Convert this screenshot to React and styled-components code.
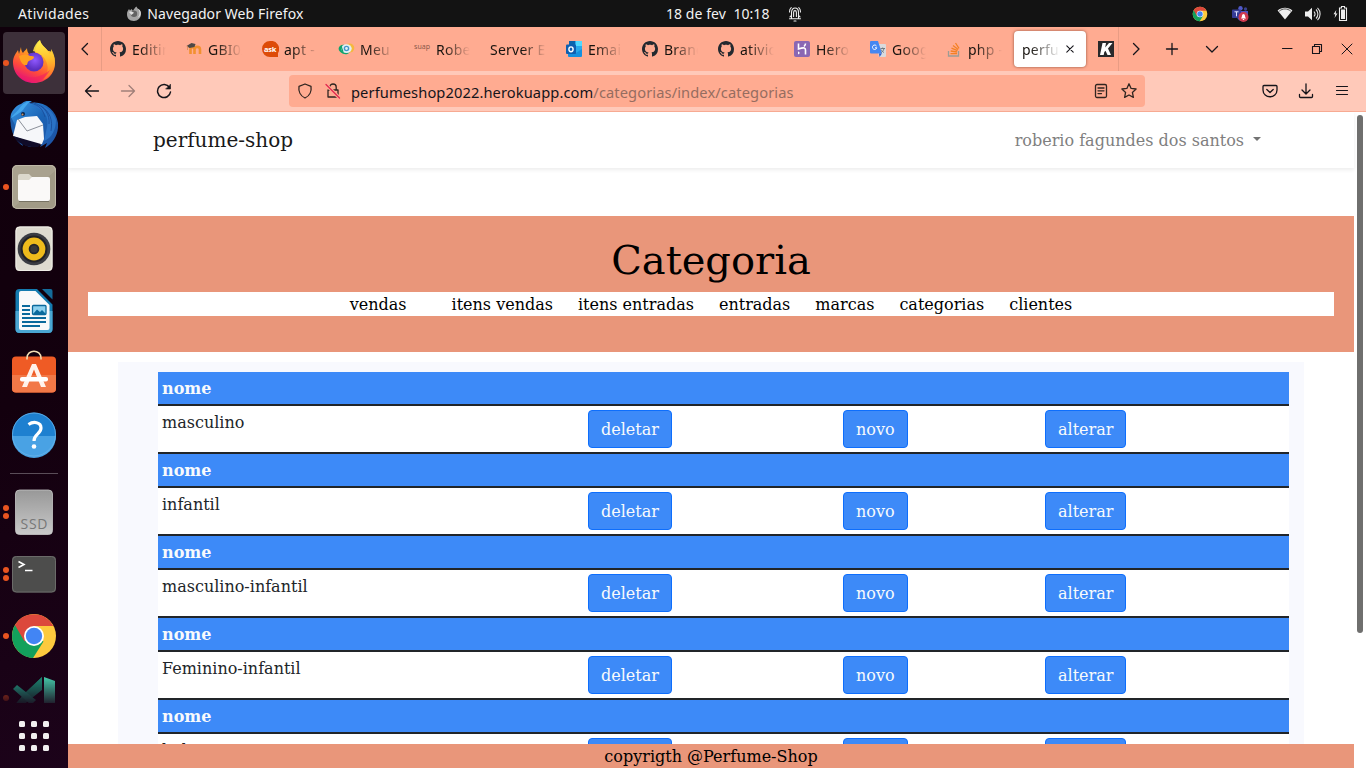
import React from "react";
import styled, { createGlobalStyle } from "styled-components";

const GlobalStyle = createGlobalStyle`
  * { box-sizing: border-box; }
  body { margin: 0; background: #131313; overflow: hidden; }
  svg { display: block; flex: none; }
`;

const uiFont = `"Noto Sans", "Open Sans", sans-serif`;
const serif = `"DejaVu Serif", serif`;

const Desktop = styled.div`
  width: 1366px;
  height: 768px;
  display: flex;
  flex-direction: column;
  overflow: hidden;
  font-family: ${uiFont};
`;

/* ---------- system bar ---------- */

const SystemBar = styled.header`
  height: 27px;
  display: grid;
  grid-template-columns: 666px 1fr 174px;
  align-items: center;
  background: #131313;
  color: #f2f2f2;
  font-size: 14px;
  line-height: 27px;
`;

const SystemGroup = styled.div`
  display: flex;
  align-items: center;
  height: 27px;
`;

const SystemText = styled.span`
  white-space: pre;
  letter-spacing: ${(p) => p.$track || 0}px;
  margin-left: ${(p) => p.$left || 0}px;
`;

const SystemIcon = styled.span`
  display: flex;
  margin-left: ${(p) => p.$left || 0}px;
`;

/* ---------- dock ---------- */

const Body = styled.div`
  flex: 1;
  display: flex;
  min-height: 0;
`;

const Dock = styled.nav`
  width: 68px;
  padding-top: 5px;
  display: flex;
  flex-direction: column;
  background: linear-gradient(160deg, #10000b 0%, #13000e 50%, #1c031a 100%);
`;

const DockSlot = styled.div`
  position: relative;
  height: ${(p) => p.$height || 62}px;
  width: 62px;
  margin-left: 3px;
  flex: none;
  padding: 7px 7px 0;
  overflow: hidden;
  border-radius: 4px;
  background: ${(p) => (p.$active ? "#3d303a" : "transparent")};
  ${(p) => p.$fade && `mask-image: linear-gradient(#000 22%, rgba(0,0,0,.15) 100%);`}
`;

const Dots = styled.div`
  position: absolute;
  left: 0;
  top: 0;
  height: 62px;
  display: flex;
  flex-direction: column;
  justify-content: center;
  gap: 2px;
`;

const Dot = styled.i`
  width: 6px;
  height: 6px;
  border-radius: 50%;
  background: #e95420;
`;

const DockDivider = styled.hr`
  width: 48px;
  height: 1px;
  margin: 7px 0 7px 10px;
  border: 0;
  background: #5a4d58;
`;

const AppGrid = styled.div`
  flex: 1;
  display: grid;
  grid-template-columns: repeat(3, 6px);
  grid-auto-rows: 6px;
  gap: 6px;
  justify-content: center;
  align-content: center;
  i { background: #f0efef; border-radius: 1.5px; }
`;

/* ---------- browser ---------- */

const Browser = styled.main`
  flex: 1;
  min-width: 0;
  display: flex;
  flex-direction: column;
  background: #fff;
`;

const TabStrip = styled.div`
  height: 44px;
  display: flex;
  align-items: center;
  background: #ffab91;
  color: #17130f;
`;

const StripButton = styled.span`
  width: ${(p) => p.$width}px;
  height: 44px;
  flex: none;
  display: flex;
  align-items: center;
  justify-content: center;
`;

const Tabs = styled.div`
  width: 1018px;
  height: 44px;
  display: flex;
  align-items: center;
  overflow: hidden;
  border-left: 1px solid #e89c84;
  border-right: 1px solid #e89c84;
`;

const Tab = styled.div`
  width: 72px;
  height: 36px;
  margin-right: 4px;
  padding-left: 8px;
  display: flex;
  align-items: center;
  flex: none;
  border-radius: 4px;
  font-size: 14px;
  ${(p) => p.$active && `background: #fff; box-shadow: 0 0 3px rgba(90, 40, 20, .7);`}
`;

const TabIcon = styled.span`
  width: 16px;
  margin-right: 6px;
`;

const TabLabel = styled.span`
  flex: 1;
  overflow: hidden;
  white-space: pre;
  line-height: 20px;
  padding-top: 1px;
  margin-right: ${(p) => (p.$active ? 6 : 8)}px;
  letter-spacing: 0.25px;
  mask-image: linear-gradient(to right, #000 ${(p) => (p.$wide ? 32 : 8)}px, transparent 100%);
`;

const Toolbar = styled.div`
  height: 41px;
  display: flex;
  align-items: center;
  background: #ffc9b9;
  border-bottom: 1px solid #f9ac94;
`;

const ToolIcon = styled.span`
  display: flex;
  margin-left: ${(p) => p.$left || 0}px;
`;

const AddressBar = styled.div`
  width: 856px;
  height: 32px;
  margin-left: 117px;
  padding: 0 8px;
  display: flex;
  align-items: center;
  border-radius: 4px;
  background: #ffab91;
`;

const Url = styled.span`
  flex: 1;
  margin-left: 10px;
  padding-top: 1px;
  font-size: 14.67px;
  line-height: 20px;
  letter-spacing: 0.1px;
  color: #15141a;
  white-space: nowrap;
  em { font-style: normal; color: #966d60; }
`;

/* ---------- web page ---------- */

const Viewport = styled.div`
  flex: 1;
  min-height: 0;
  display: flex;
`;

const Page = styled.div`
  width: 1286px;
  display: flex;
  flex-direction: column;
  font: 16px/26px ${serif};
  color: #212529;
`;

const ScrollRail = styled.div`
  width: 12px;
  padding: 3px 3px 0;
`;

const ScrollThumb = styled.div`
  width: 6px;
  height: 518px;
  border-radius: 3px;
  background: #6f6f6e;
`;

const Navbar = styled.div`
  height: 56px;
  flex: none;
  padding: 0 93px 0 85px;
  display: flex;
  align-items: center;
  justify-content: space-between;
  box-shadow: 0 2px 4px rgba(0, 0, 0, 0.075);
`;

const Brand = styled.span`
  font-size: 20px;
  line-height: 30px;
  color: #191919;
`;

const UserMenu = styled.span`
  display: flex;
  align-items: center;
  padding-top: 2px;
  color: #7f7f7f;
`;

const Caret = styled.i`
  margin: -5px 0 0 9px;
  border: 4.8px solid transparent;
  border-top-color: #737373;
  border-bottom: 0;
`;

const Hero = styled.section`
  height: 136px;
  flex: none;
  margin-top: 48px;
  padding: 20px 20px 0;
  background: #e9967a;
  color: #000;
  text-align: center;
`;

const Title = styled.h1`
  margin: 0 0 8px;
  font-size: 40px;
  font-weight: 400;
  line-height: 48px;
`;

const Menu = styled.div`
  display: flex;
  justify-content: center;
  gap: 25px;
  height: 24px;
  background: #fff;
  span:first-child { margin-right: 20px; }
`;

const Content = styled.section`
  flex: 1;
  min-height: 0;
  overflow: hidden;
  margin: 10px 50px 0;
  padding: 10px 15px 0 40px;
  background: #f8f9fe;
`;

const HeadRow = styled.div`
  height: 34px;
  padding: 4px;
  background: #3d8af8;
  border-bottom: 2px solid #212529;
  color: #f8fafc;
  font-weight: 700;
`;

const Row = styled.div`
  height: 48px;
  padding: 4px;
  display: grid;
  grid-template-columns: 426px 255px 202px 1fr;
  align-items: start;
  justify-items: start;
  background: #fff;
  border-bottom: 2px solid #212529;
`;

const Button = styled.button`
  height: 38px;
  padding: 7px 12px 5px;
  border: 1px solid #0d6efd;
  border-radius: 4px;
  background: #3d8af8;
  color: #f8fafc;
  font: 16px/24px ${serif};
`;

const Footer = styled.footer`
  height: 24px;
  flex: none;
  background: #e9967a;
  color: #000;
  text-align: center;
`;

/* ---------- drawings ---------- */

const Line = ({ w = 16, h = w, box, children, color = "#15141a", sw = 1.3, opacity = 1 }) => (
  <svg width={w} height={h} viewBox={box || `0 0 ${w} ${h}`} fill="none" stroke={color}
    strokeWidth={sw} strokeLinecap="round" strokeLinejoin="round" opacity={opacity}>{children}</svg>
);

const Firefox = () => (
  <svg width="48" height="48" viewBox="0 1 48 48">
    <defs>
      <linearGradient id="ffBody" x1=".8" y1="0" x2=".35" y2="1">
        <stop offset="0" stopColor="#ffe141" /><stop offset=".4" stopColor="#ff9a23" />
        <stop offset=".72" stopColor="#ff4a3c" /><stop offset="1" stopColor="#e0107f" />
      </linearGradient>
      <linearGradient id="ffFlame" x1=".4" y1="0" x2=".5" y2="1">
        <stop offset="0" stopColor="#fff44f" /><stop offset=".5" stopColor="#ffc22c" /><stop offset="1" stopColor="#ff6a2a" />
      </linearGradient>
      <radialGradient id="ffGlobe" cx=".55" cy=".4"><stop offset="0" stopColor="#9059ff" /><stop offset="1" stopColor="#5b2fc0" /></radialGradient>
    </defs>
    <path d="M11 9c0 3 1 5 2 6 2-3 3-3 4-5 0 3 1 5 2 6l6-1c0-5 2-10 5-13 1 5 5 7 8 11 4-1 7 5 7 12 0 11-9 20-21 20S3 36 3 24c0-5 3-9 5-12l1 4z" fill="url(#ffBody)" />
    <path d="M23 13c1-5 4-9 7-11 1 6 7 8 10 14 1-2 1-3 1-5 8 12 3 27-8 31 5-6 6-13 3-19-2-5-7-8-13-10z" fill="url(#ffFlame)" opacity=".9" />
    <circle cx="24" cy="24" r="9.5" fill="url(#ffGlobe)" />
    <path d="M9 18c4-2 8-2 11 0 2 0 4 0 4 1 0 3-5 3-6 5-1 1 0 3-2 3-3 1-6-4-7-9z" fill="#ff9f1f" />
    <path d="M4 29c5 11 22 15 36 3-4 8-10 12-17 12C13 44 6 37 4 29z" fill="#f01e62" opacity=".55" />
  </svg>
);

const Thunderbird = () => (
  <svg width="48" height="48" viewBox="0 1 48 48">
    <defs><linearGradient id="tb" x1="0" y1="0" x2="1" y2="1">
      <stop offset="0" stopColor="#3b9be8" /><stop offset=".5" stopColor="#1b63b5" /><stop offset="1" stopColor="#1d4fa0" />
    </linearGradient></defs>
    <path d="M11 4c5-4 9-4 11-3l-3 2c14-3 27 6 29 20 1 10-4 20-13 25l2-5-7 4 3-6-20-6C2 31-1 22 1 14c2-5 6-9 10-10z" fill="url(#tb)" />
    <path d="M1 17c-2 11 3 23 12 29l-1-3c5 4 9 4 12 4-8-5-12-9-16-16z" fill="#1d5ba8" />
    <path d="M7 20l8-3 12-1 6 8 1 15-2 5-3 1L3 36z" fill="#f6f7fa" />
    <path d="M8 19l9 12 16-6" fill="none" stroke="#8b8f99" strokeWidth="1" />
    <path d="M20 6c10 1 20 8 17 21l-3 14c8-3 12-12 12-21C42 9 33 3 20 6z" fill="#2a72c6" />
    <path d="M20 3c10 2 13 7 15 14M24 3c11 3 16 12 15 21M31 6c9 6 12 14 10 25" fill="none" stroke="#1a4f9d" strokeWidth=".9" />
    <path d="M3 36l28 8-3 3C18 48 8 44 3 36z" fill="#100b28" />
    <path d="M9 9c3-5 8-8 12-8-4 3-5 5-8 9-3 3-7 5-12 8 2-4 5-5 8-9z" fill="#43a6ec" />
    <circle cx="13" cy="14" r="2" fill="#0d2547" /><circle cx="12.5" cy="14.5" r="1" fill="#cd9465" />
  </svg>
);

const Files = () => (
  <svg width="48" height="48" viewBox="0 0 48 48">
    <rect x="2" y="2" width="44" height="44" rx="5" fill="#a19a86" />
    <path d="M2 7a5 5 0 0 1 5-5h34a5 5 0 0 1 5 5L3 45l-1-4z" fill="#b1aa97" opacity=".55" />
    <rect x="2.5" y="2.5" width="43" height="43" rx="5" fill="none" stroke="#c5bfae" strokeWidth=".8" />
    <path d="M8 13a2 2 0 0 1 2-2h9l3 3h14v5H8z" fill="#dbd8cc" />
    <path d="M8 17h11l3-3h16a2 2 0 0 1 2 2v20a2 2 0 0 1-2 2H10a2 2 0 0 1-2-2z" fill="#faf9f8" />
    <path d="M9 38.5h30" stroke="#777263" strokeWidth="1" />
  </svg>
);

const Music = () => (
  <svg width="48" height="48" viewBox="0 0 48 48">
    <rect x="5.5" y="1.500" width="37" height="44.500" rx="4" fill="#dedbd0" />
    <rect x="6" y="2" width="36" height="43.500" rx="4" fill="none" stroke="#f0eee8" />
    <circle cx="24" cy="24" r="16.3" fill="#3b3d43" /><circle cx="24" cy="24" r="13.5" fill="#222327" />
    <circle cx="24" cy="24" r="11.4" fill="#eebb1c" /><circle cx="24" cy="24" r="5.3" fill="#252629" />
    <circle cx="24" cy="24" r="3.5" fill="#373839" />
  </svg>
);

const Writer = () => (
  <svg width="48" height="48" viewBox="0 0 48 48">
    <path d="M9.5 2H27l15.500 15.500V42a4 4 0 0 1-4 4h-29a4 4 0 0 1-4-4V6a4 4 0 0 1 4-4z" fill="#147bb0" />
    <path d="M5.500 24H42.500v18a4 4 0 0 1-4 4h-29a4 4 0 0 1-4-4z" fill="#4aa6d2" />
    <path d="M11 4h14.500L39.500 18v23a2 2 0 0 1-2 2H11a2 2 0 0 1-2-2V6a2 2 0 0 1 2-2z" fill="#f8f9fa" />
    <path d="M32 2h8.500a2 2 0 0 1 2 2v8.500z" fill="#146c9b" />
    <path d="M12 19h8m-8 4h8m-8 4h8m-8 4h24m-24 4h24m-24 4h18" stroke="#0a699c" strokeWidth="1.800" />
    <rect x="22.500" y="18.500" width="13.500" height="9" rx="1" fill="#8dd1ef" stroke="#0a699c" strokeWidth="1.300" />
    <path d="M23 27l4-4.500 3 2.500 2-2 4 4v.5H23z" fill="#0a699c" />
  </svg>
);

const Software = () => (
  <svg width="48" height="48" viewBox="0 0 48 48">
    <rect x="2" y="7.500" width="44" height="36" rx="4" fill="#ef5b25" />
    <path d="M2 26h44v13.500a4 4 0 0 1-4 4H6a4 4 0 0 1-4-4z" fill="#f27847" />
    <path d="M17 10.500V9c0-9 14-9 14 0v1.500" fill="none" stroke="#f2dfb4" strokeWidth="1.500" />
    <path d="M12 38l10-23h4l10 23h-5L24 20.500 17 38z" fill="#fff2eb" />
    <rect x="10" y="28" width="28" height="4.500" rx="2" fill="#fff" />
  </svg>
);

const Help = () => (
  <svg width="48" height="48" viewBox="0 1 48 48">
    <circle cx="24" cy="24.500" r="22" fill="#1e80d0" />
    <path d="M2 26a22 22 0 0 0 44 0z" fill="#49a2e4" />
    <circle cx="24" cy="24.500" r="21.500" fill="none" stroke="#68b4ea" strokeWidth=".8" />
    <path d="M18.500 14.500c5-3.500 12.500-2.500 12.500 3.500 0 6-7 6-7 13" fill="none" stroke="#fff" strokeWidth="3.200" />
    <circle cx="24" cy="36.500" r="2.300" fill="#fff" />
  </svg>
);

const Ssd = () => (
  <svg width="48" height="48" viewBox="0 0 48 48">
    <defs><linearGradient id="ssd" x1="0" y1="0" x2="0" y2="1">
      <stop offset="0" stopColor="#989898" /><stop offset="1" stopColor="#c9c9c9" /></linearGradient></defs>
    <rect x="5.500" y="2" width="37" height="44.500" rx="4" fill="url(#ssd)" stroke="#c6c6c6" strokeWidth=".8" />
    <text x="24" y="40.500" textAnchor="middle" fontFamily="Open Sans, sans-serif" fontSize="14" fill="#777" textLength="27">SSD</text>
  </svg>
);

const Terminal = () => (
  <svg width="48" height="48" viewBox="0 0 48 48">
    <rect x="2" y="6" width="44" height="36.500" rx="4" fill="#4d4d4c" />
    <rect x="2.500" y="6.500" width="43" height="35.500" rx="4" fill="none" stroke="#6b6b69" />
    <path d="M8.500 11.500l5.500 3-5.500 3" fill="none" stroke="#fff" strokeWidth="1.600" />
    <path d="M15 20.500h7.500" stroke="#fff" strokeWidth="1.500" />
  </svg>
);

const Chrome = ({ size = 48 }) => (
  <svg width={size} height={size} viewBox="0 0 48 48">
    <circle cx="24" cy="24" r="22" fill="#fdca3e" />
    <path d="M24 24L33.500 29.500 23 46A22 22 0 0 1 5 13z" fill="#12a15c" />
    <path d="M4.950 13A22 22 0 0 1 43.300 14H24L14.500 29.500z" fill="#dc483c" />
    <circle cx="24" cy="24" r="10" fill="#fff" /><circle cx="24" cy="24" r="8.200" fill="#4285f4" />
  </svg>
);

const Code = () => (
  <svg width="48" height="48" viewBox="0 0 48 48">
    <path d="M3 33l4 3 25-22V3L17 17z" fill="#167a67" />
    <path d="M3 33l4 3 25-20V3L13 21z" fill="#1c8d76" />
    <path d="M3 15l4-4 19 15-5 5z" fill="#22a68b" />
    <path d="M34 3l11 4v34l-11 5z" fill="#47d6b3" />
  </svg>
);

const GitHub = () => (
  <svg width="16" height="16" viewBox="0 0 16 16" fill="#24292f">
    <path d="M8 0C3.580 0 0 3.580 0 8c0 3.540 2.290 6.530 5.470 7.590.4.070.55-.17.55-.38 0-.19-.01-.82-.01-1.490-2.010.37-2.530-.49-2.690-.94-.09-.23-.48-.94-.82-1.130-.28-.15-.68-.52-.01-.53.63-.01 1.080.58 1.230.82.72 1.210 1.870.87 2.330.66.07-.52.28-.87.51-1.070-1.780-.2-3.640-.89-3.640-3.950 0-.87.31-1.590.82-2.150-.08-.2-.36-1.020.08-2.120 0 0 .67-.21 2.200.82.64-.18 1.320-.27 2-.27s1.360.09 2 .27c1.530-1.040 2.200-.82 2.200-.82.44 1.100.16 1.920.08 2.120.51.56.82 1.270.82 2.150 0 3.070-1.870 3.750-3.650 3.950.29.25.54.73.54 1.480 0 1.070-.01 1.930-.01 2.200 0 .21.15.46.55.38A8.010 8.010 0 0 0 16 8c0-4.420-3.580-8-8-8z" />
  </svg>
);

const Moodle = () => (
  <svg width="16" height="16" viewBox="-.5 0 16 16">
    <path d="M4 13V8.500c0-3 4-3 4 0V13m0-4.500c0-3.500 5.500-3.500 5.500 0V13" fill="none" stroke="#f29030" strokeWidth="2.600" />
    <path d="M0 5l5-3 4 1-1 3-5 1z" fill="#4d4846" /><path d="M1 5v4" stroke="#d98b50" strokeWidth=".8" />
  </svg>
);

const AskUbuntu = () => (
  <svg width="17" height="16" viewBox="0 0 17 16">
    <path d="M8 0a8 8 0 1 0 0 16h8v-4A8 8 0 0 0 8 0z" fill="#dd4b08" />
    <text x="2" y="10.500" fontFamily="Open Sans, sans-serif" fontWeight="700" fontSize="7.500" fill="#fff" textLength="12.500">ask</text>
  </svg>
);

const Globe = () => (
  <svg width="17" height="16" viewBox="0 0 17 16">
    <ellipse cx="6.500" cy="8.500" rx="6" ry="4.500" fill="#11a36d" transform="rotate(20 6.500 8.500)" />
    <ellipse cx="11.500" cy="7" rx="4.800" ry="4.500" fill="#f5b83d" />
    <ellipse cx="8.500" cy="7.600" rx="5.200" ry="4.300" fill="#e3f1f5" />
    <circle cx="8.500" cy="7.500" r="2.100" fill="none" stroke="#4597c8" strokeWidth="1.400" />
    <path d="M3 5l2 6" stroke="#11a36d" strokeWidth="1.200" />
  </svg>
);

const Suap = () => (
  <svg width="17" height="16" viewBox="0 0 17 16">
    <text x="0" y="8" fontFamily="Open Sans, sans-serif" fontSize="8" fill="#865648" textLength="16" lengthAdjust="spacingAndGlyphs">suap</text>
  </svg>
);

const Outlook = () => (
  <svg width="16" height="16" viewBox="0 0 16 16">
    <rect x="3" width="13" height="15" rx="1" fill="#28a8ea" /><path d="M3 0h6v5H3z" fill="#0a64ad" />
    <path d="M10 0h6v5h-6z" fill="#50d9ff" /><path d="M2 8l8 4 6-4v7a1 1 0 0 1-1 1H3a1 1 0 0 1-1-1z" fill="#1490df" />
    <rect y="3.500" width="10" height="9.500" rx="1" fill="#0f5fb0" />
    <ellipse cx="5" cy="8.300" rx="2.100" ry="2.400" fill="none" stroke="#fff" strokeWidth="1.400" />
  </svg>
);

const Heroku = () => (
  <svg width="16" height="16" viewBox="0 0 16 16">
    <rect width="16" height="16" rx="2" fill="#8a67b3" />
    <path d="M4.500 2.500v5.500c6-2 7-1 7 1v4.500M11.500 2.500c0 1-.5 2-1.500 3" fill="none" stroke="#fff" strokeWidth="1.600" />
    <path d="M4 10.200l2 1.700-2 1.700z" fill="#fff" />
  </svg>
);

const Translate = () => (
  <svg width="16" height="16" viewBox="0 0 16 16">
    <path d="M6 3h9a1 1 0 0 1 1 1v11a1 1 0 0 1-1 1H9z" fill="#d9dadd" />
    <path d="M1 0h7l4 12.500H1a1 1 0 0 1-1-1V1a1 1 0 0 1 1-1z" fill="#4687f1" />
    <path d="M9 12.500h3L9.500 16z" fill="#2d5dcc" />
    <path d="M6.500 5A2.200 2.200 0 1 0 6.800 6.800H5" fill="none" stroke="#fff" strokeWidth="1" />
    <path d="M10.500 7.500h4.500M12.700 6.500v1m1.300 0c-.5 2.500-2 3.500-3 4m0-3c.6 1.500 2 2.500 3 3" fill="none" stroke="#68747a" strokeWidth=".9" />
  </svg>
);

const StackOverflow = () => (
  <svg width="16" height="16" viewBox="-1 0 16 16" fill="none">
    <path d="M1.500 10v5h10v-5" stroke="#9c9c95" strokeWidth="1.300" />
    <path d="M3.500 12.600h6.500M3.700 10l6.300 1M4.500 7.200l6 2.500M6 4.500l5.200 4M8.500 2l3.500 5.300" stroke="#f48024" strokeWidth="1.300" />
  </svg>
);

const KLogo = () => (
  <svg width="16" height="16" viewBox="0 0 16 16">
    <rect width="16" height="16" fill="#29292b" />
    <path d="M4.500 2H8L7.200 6.500 11 2h3.500L10 7.500l3 6.500H9.500L7.500 9.800 6.300 11l-.6 3H2z" fill="#fff" />
  </svg>
);

const MonoFirefox = () => (
  <svg width="16" height="16" viewBox="0 0 16 16">
    <path d="M3 3l1 1.500 1.500-1.500 1.500 2C8 3 9 1.500 10.500.5c.5 2 2 3 3 4.500l.2-1C17 10 13 15 8 15S1 12 1 8c0-2 .9-3.500 2-5z" fill="#a4a4a4" />
    <path d="M10.500.5c.5 2 3 4 3 6s-.5 4-2 5c3 0 4.500-5 2.200-7.500C13 3 11 2.500 10.500.5z" fill="#dcdcdc" />
    <circle cx="8" cy="7.800" r="3.200" fill="#626262" /><path d="M3 6c2-1 3 0 5 .5C7 8 6 8 5.500 9z" fill="#e0e0e0" />
  </svg>
);

const Bell = () => (
  <Line w={14} h={16} color="#eee" sw={1.1}>
    <path d="M1.500 12.800h11M3.500 12.500V6.500C3.500.5 10.500.5 10.500 6.500v6M5.600 10.500V6.500c0-2.500 2.800-2.500 2.800 0v4M6 15h2M1.500 6c0-2 .5-3.300 1.700-4.300M12.500 6c0-2-.5-3.300-1.700-4.300M2 10.800l1.500-1.500m8.500 1.500l-1.500-1.500" />
  </Line>
);

const Teams = () => (
  <svg width="17" height="16" viewBox="0 0 17 16">
    <circle cx="8.500" cy="2.300" r="2.200" fill="#5059c9" /><circle cx="13.500" cy="3" r="1.700" fill="#3a438f" />
    <path d="M5 5h11v6c0 5-10 6-11 0z" fill="#4b53bc" /><rect y="3.500" width="9" height="8.500" rx=".8" fill="#343b96" />
    <path d="M2.500 5.800h4M4.500 5.800v4.500" stroke="#dfe2ff" strokeWidth="1" />
    <circle cx="11.500" cy="11" r="5" fill="#d13a4e" /><path d="M9 12.500l.8-1.500c0-4 3.400-4 3.400 0l.8 1.500zM10.800 13h1.400v1h-1.400z" fill="#fff" />
  </svg>
);

const Wifi = () => (
  <svg width="16" height="14" viewBox="0 1 16 14">
    <path d="M.6 4.500C4.500.7 11.500.7 15.400 4.500L8 13.500z" fill="#eee" />
    <path d="M2.200 5.200c3.400-3 8.200-3 11.600 0" fill="none" stroke="#131313" strokeWidth=".7" />
  </svg>
);

const Volume = () => (
  <svg width="16" height="14" viewBox="0 0 16 14">
    <path d="M0 4.500h3L7 .8v12.400L3 9.500H0z" fill="#eee" />
    <path d="M9 4.500c1.300 1.500 1.300 3.500 0 5M11 2.500c2.500 2.500 2.500 6.500 0 9M12.500.8c3.500 3.500 3.500 8.900 0 12.400" fill="none" stroke="#ddd" strokeWidth="1.100" />
  </svg>
);

const Battery = () => (
  <svg width="15" height="16" viewBox="0 .5 15 16">
    <path d="M3.300 4.500L.5 8.800h1.800L1.600 12.500 4.500 8H2.700z" fill="#eee" />
    <path d="M6.500 2.500h2v-1.500h3v1.500h2v12.500h-7z" fill="none" stroke="#eee" strokeWidth="1.100" />
    <rect x="8" y="4" width="4" height="9.500" fill="#eee" />
  </svg>
);

/* ---------- data ---------- */

const dockTop = [
  { Icon: Firefox, dots: 1, active: true },
  { Icon: Thunderbird, dots: 0 },
  { Icon: Files, dots: 1 },
  { Icon: Music, dots: 0 },
  { Icon: Writer, dots: 0 },
  { Icon: Software, dots: 0 },
  { Icon: Help, dots: 0 },
];

const dockBottom = [
  { Icon: Ssd, dots: 2 },
  { Icon: Terminal, dots: 2 },
  { Icon: Chrome, dots: 1 },
  { Icon: Code, dots: 1, height: 36, fade: true },
];

const tabs = [
  { Icon: GitHub, label: "Editing" },
  { Icon: Moodle, label: "GBI02" },
  { Icon: AskUbuntu, label: "apt - " },
  { Icon: Globe, label: "Meu " },
  { Icon: Suap, label: "Rober" },
  { label: "Server E" },
  { Icon: Outlook, label: "Email" },
  { Icon: GitHub, label: "Branc" },
  { Icon: GitHub, label: "ativid" },
  { Icon: Heroku, label: "Hero" },
  { Icon: Translate, label: "Goog" },
  { Icon: StackOverflow, label: "php - " },
];

const links = ["vendas", "itens vendas", "itens entradas", "entradas", "marcas", "categorias", "clientes"];
const categories = ["masculino", "infantil", "masculino-infantil", "Feminino-infantil", "bebe"];

const DockItem = ({ Icon, dots, active, height, fade }) => (
  <DockSlot $active={active} $height={height} $fade={fade}>
    <Dots>{Array.from({ length: dots }, (_, i) => <Dot key={i} />)}</Dots>
    <Icon />
  </DockSlot>
);

export default function App() {
  return (
    <Desktop>
      <GlobalStyle />
      <SystemBar>
        <SystemGroup>
          <SystemText $left={18} $track={0.33}>Atividades</SystemText>
          <SystemIcon $left={37}><MonoFirefox /></SystemIcon>
          <SystemText $left={5} $track={0.1}>Navegador Web Firefox</SystemText>
        </SystemGroup>
        <SystemGroup>
          <SystemText $track={0.07}>18 de fev  10:18</SystemText>
          <SystemIcon $left={18}><Bell /></SystemIcon>
        </SystemGroup>
        <SystemGroup>
          <SystemIcon><Chrome size={16} /></SystemIcon>
          <SystemIcon $left={24}><Teams /></SystemIcon>
          <SystemIcon $left={28}><Wifi /></SystemIcon>
          <SystemIcon $left={12}><Volume /></SystemIcon>
          <SystemIcon $left={12}><Battery /></SystemIcon>
        </SystemGroup>
      </SystemBar>

      <Body>
        <Dock>
          {dockTop.map((d, i) => <DockItem key={i} {...d} />)}
          <DockDivider />
          {dockBottom.map((d, i) => <DockItem key={i} {...d} />)}
          <AppGrid>{Array.from({ length: 9 }, (_, i) => <i key={i} />)}</AppGrid>
        </Dock>

        <Browser>
          <TabStrip>
            <StripButton $width={33}><Line><path d="M10.500 2.500L5 8l5.500 5.500" /></Line></StripButton>
            <Tabs>
              {tabs.map(({ Icon, label }, i) => (
                <Tab key={i}>
                  {Icon && <TabIcon><Icon /></TabIcon>}
                  <TabLabel $wide={!Icon}>{label}</TabLabel>
                </Tab>
              ))}
              <Tab $active>
                <TabLabel $active>perfume</TabLabel>
                <ToolIcon><Line w={8} sw={1.1}><path d="M.8.8l6.400 6.400M7.200.8L.8 7.200" /></Line></ToolIcon>
                <StripButton $width={12} />
              </Tab>
              <Tab><TabIcon><KLogo /></TabIcon></Tab>
            </Tabs>
            <StripButton $width={33}><Line><path d="M5.500 2.500L11 8l-5.500 5.500" /></Line></StripButton>
            <StripButton $width={40}><Line><path d="M8 2.500v11M2.500 8h11" /></Line></StripButton>
            <StripButton $width={40}><Line><path d="M2.500 5.500L8 11l5.500-5.500" /></Line></StripButton>
            <ToolIcon $left={47}><Line sw={1.1}><path d="M3.500 7.500h9.500" /></Line></ToolIcon>
            <ToolIcon $left={14}><Line sw={1.1}><path d="M3.500 5.500h7v7h-7zM5.500 5.500v-2h7v7h-2" /></Line></ToolIcon>
            <ToolIcon $left={14}><Line sw={1}><path d="M3 3l10 10M13 3L3 13" /></Line></ToolIcon>
          </TabStrip>

          <Toolbar>
            <ToolIcon $left={16}><Line><path d="M14.500 8h-13M7 2.500L1.500 8 7 13.500" /></Line></ToolIcon>
            <ToolIcon $left={20}><Line opacity={0.4}><path d="M1.500 8h13M9 2.500L14.500 8 9 13.500" /></Line></ToolIcon>
            <ToolIcon $left={20}><Line sw={1.5}><path d="M13.500 4.500A6.500 6.500 0 1 0 14.500 9" /><path d="M14.500 1.500v4.500H10z" fill="#15141a" strokeWidth=".6" /></Line></ToolIcon>
            <AddressBar>
              <Line color="#302520"><path d="M8 1l6 2.300c.8 5-1.500 9.700-6 11.700-4.500-2-6.800-6.700-6-11.700z" /></Line>
              <ToolIcon $left={12}>
                <Line color="#302520">
                  <path d="M3 7h10v7H3zM4.800 7V4c0-4 6.400-4 6.400 0v3" />
                  <path d="M1 1.500L14.500 15" stroke="#ffab91" strokeWidth="3.400" />
                  <path d="M1 1.500L14.500 15" stroke="#e22850" />
                </Line>
              </ToolIcon>
              <Url>perfumeshop2022.herokuapp.com<em>/categorias/index/categorias</em></Url>
              <Line color="#302520"><rect x="2.500" y="1.500" width="11" height="13" rx="1.500" /><path d="M5 5h6M5 7.800h6M5 10.600h3.500" /></Line>
              <ToolIcon $left={12}>
                <Line color="#302520"><path d="M8 .8l2.100 4.600 5 .6-3.700 3.400 1 5L8 12l-4.400 2.400 1-5L.9 6l5-.6z" /></Line>
              </ToolIcon>
            </AddressBar>
            <ToolIcon $left={117}><Line><path d="M2 2.500h12c.6 0 1 .4 1 1V7c0 9-14 9-14 0V3.500c0-.6.4-1 1-1zM4.800 6.500L8 9.500l3.200-3" /></Line></ToolIcon>
            <ToolIcon $left={20}><Line><path d="M8 .8v9.700M4 7l4 4 4-4M1.500 11.500v2c0 .6.4 1 1 1h11c.6 0 1-.4 1-1v-2" /></Line></ToolIcon>
            <ToolIcon $left={20}><Line sw={1.2}><path d="M2.500 3.500h11M2.500 7.500h11M2.500 11.500h11" /></Line></ToolIcon>
          </Toolbar>

          <Viewport>
            <Page>
              <Navbar>
                <Brand>perfume-shop</Brand>
                <UserMenu>roberio fagundes dos santos<Caret /></UserMenu>
              </Navbar>
              <Hero>
                <Title>Categoria</Title>
                <Menu>{links.map((l) => <span key={l}>{l}</span>)}</Menu>
              </Hero>
              <Content>
                {categories.map((c) => (
                  <React.Fragment key={c}>
                    <HeadRow>nome</HeadRow>
                    <Row>
                      <span>{c}</span>
                      <Button>deletar</Button>
                      <Button>novo</Button>
                      <Button>alterar</Button>
                    </Row>
                  </React.Fragment>
                ))}
              </Content>
              <Footer>copyrigth @Perfume-Shop</Footer>
            </Page>
            <ScrollRail><ScrollThumb /></ScrollRail>
          </Viewport>
        </Browser>
      </Body>
    </Desktop>
  );
}
